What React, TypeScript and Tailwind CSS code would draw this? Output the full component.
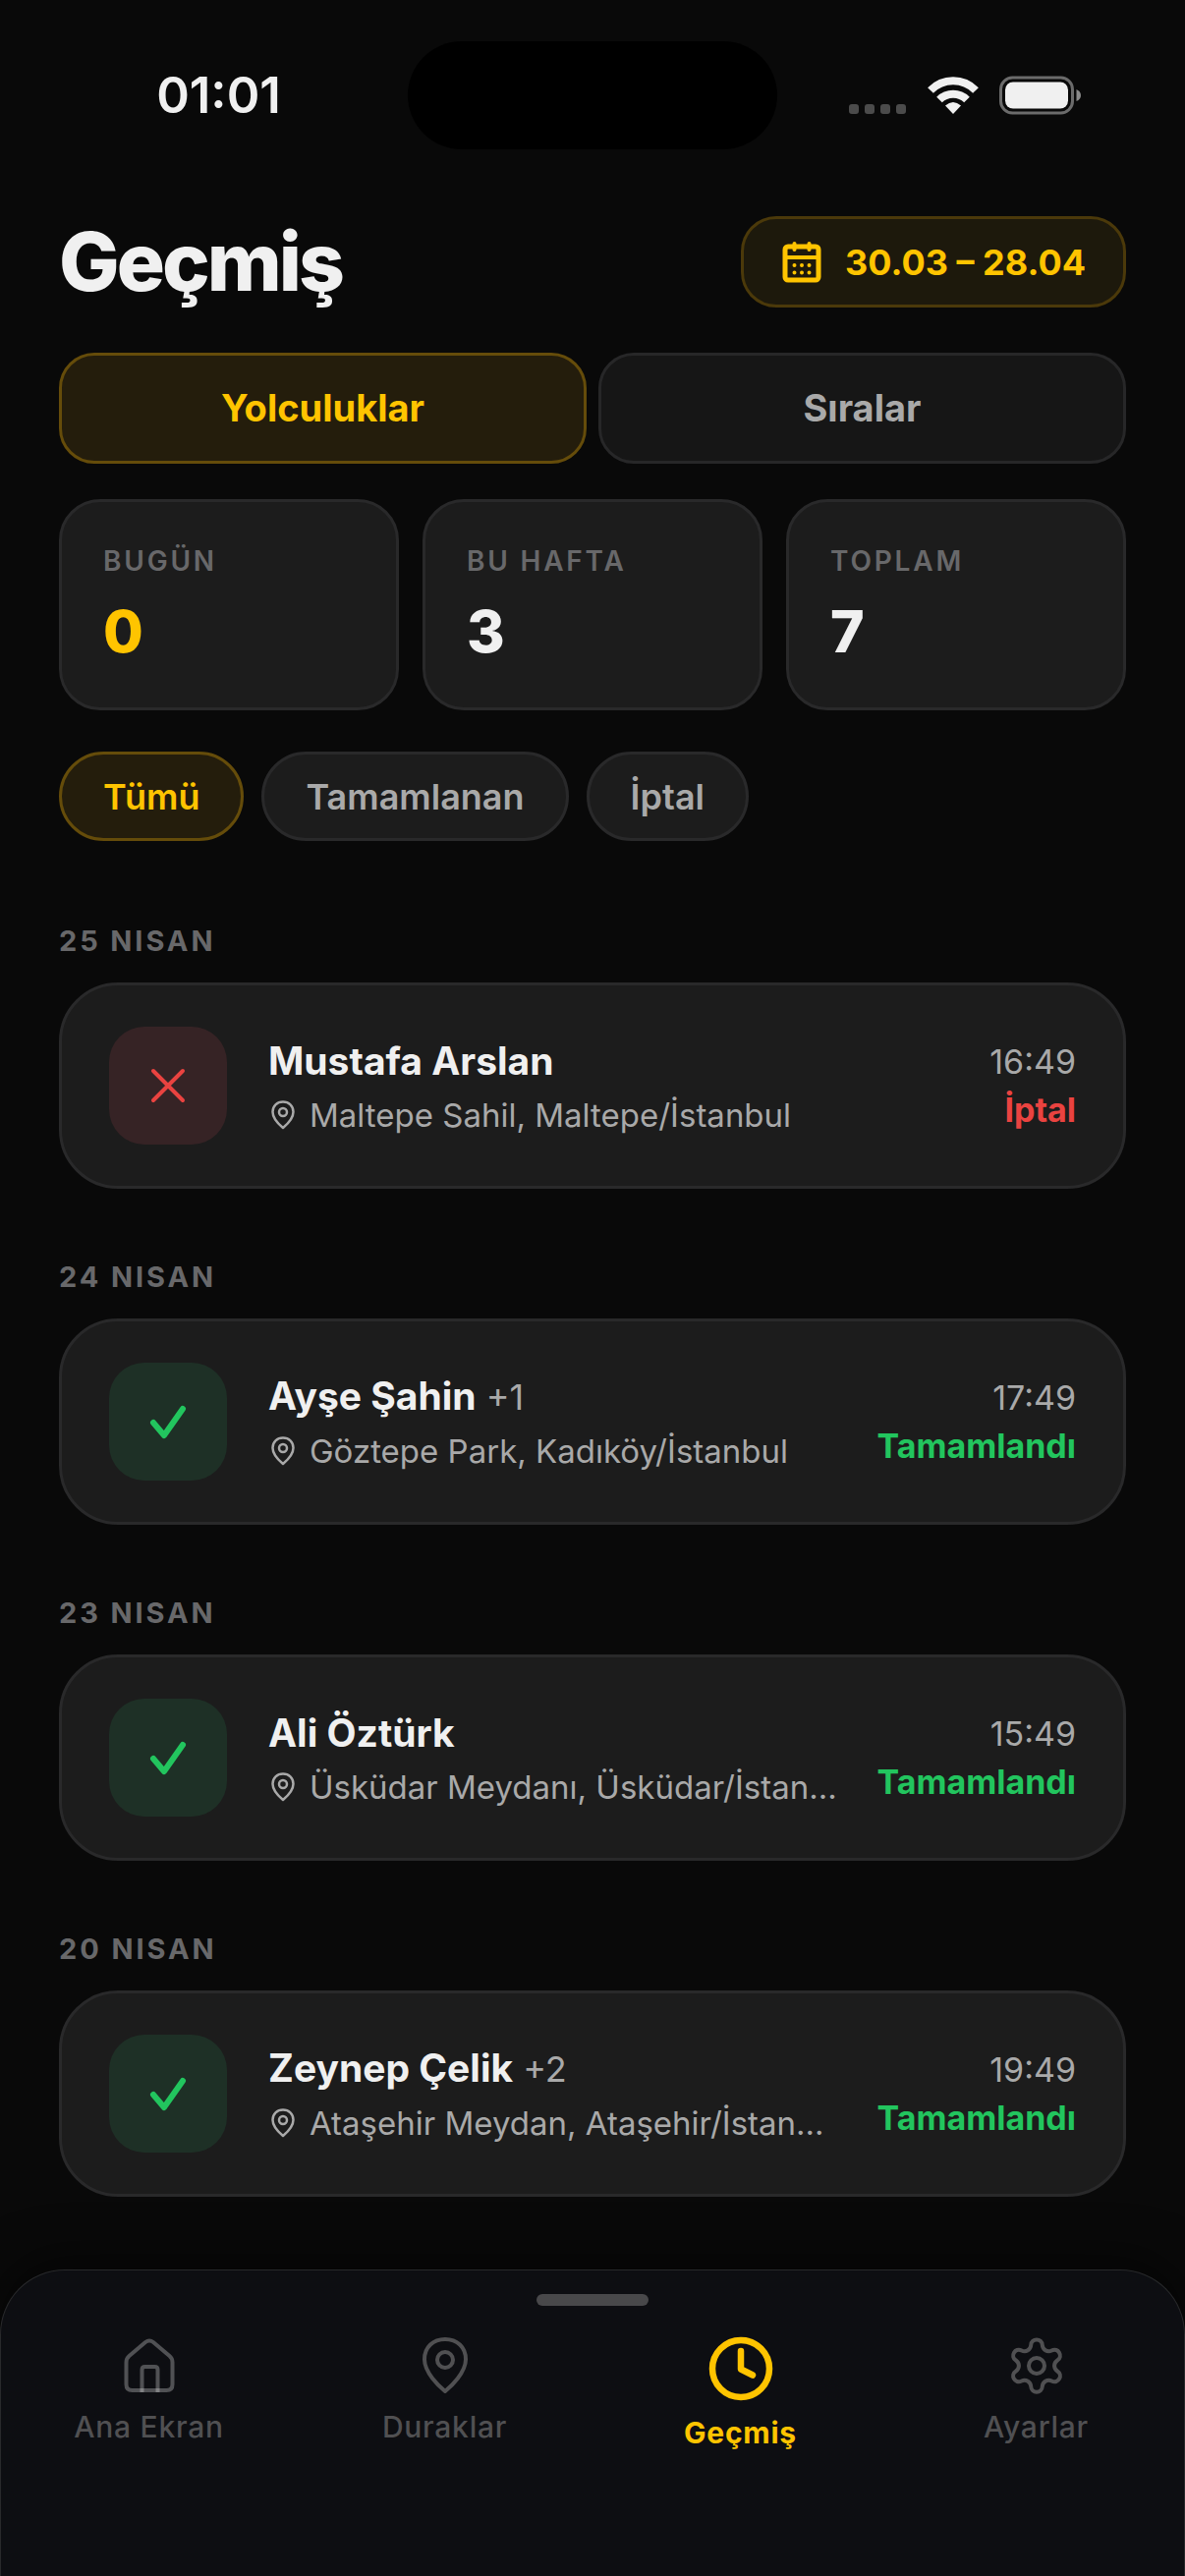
import { useState } from 'react';
import clsx from 'clsx';

type Status = 'done' | 'cancelled';

interface Trip {
  date: string;
  name: string;
  extra?: string;
  address: string;
  time: string;
  status: Status;
}

const TRIPS: Trip[] = [
  { date: '25 NISAN', name: 'Mustafa Arslan', address: 'Maltepe Sahil, Maltepe/İstanbul', time: '16:49', status: 'cancelled' },
  { date: '24 NISAN', name: 'Ayşe Şahin', extra: '+1', address: 'Göztepe Park, Kadıköy/İstanbul', time: '17:49', status: 'done' },
  { date: '23 NISAN', name: 'Ali Öztürk', address: 'Üsküdar Meydanı, Üsküdar/İstanbul', time: '15:49', status: 'done' },
  { date: '20 NISAN', name: 'Zeynep Çelik', extra: '+2', address: 'Ataşehir Meydan, Ataşehir/İstanbul', time: '19:49', status: 'done' },
];

const STATS = [
  { label: 'BUGÜN', value: 0, accent: true },
  { label: 'BU HAFTA', value: 3 },
  { label: 'TOPLAM', value: 7 },
];

const TABS = ['Yolculuklar', 'Sıralar'];
const FILTERS = ['Tümü', 'Tamamlanan', 'İptal'];

function PinIcon({ className, strokeWidth }: { className: string; strokeWidth: number }) {
  return (
    <svg viewBox="0 0 48 60" className={className} fill="none" stroke="currentColor" strokeWidth={strokeWidth} strokeLinejoin="round" aria-hidden="true">
      <path d="M24 56C18 51 3 37 3 23.5C3 11 12 3 24 3S45 11 45 23.5C45 37 30 51 24 56Z" />
      <circle cx="24" cy="24" r="8" />
    </svg>
  );
}

function CalendarIcon() {
  return (
    <svg viewBox="0 0 42 44" className="h-11 w-[42px]" fill="none" stroke="currentColor" strokeWidth="5" strokeLinecap="round" aria-hidden="true">
      <rect x="4" y="6" width="34" height="34" rx="3" />
      <path d="M4 17H38" strokeWidth="4" />
      <path d="M13.500 3V9M28.500 3V9" strokeWidth="4" />
      <path d="M13.500 25V25.100M21 25V25.100M28.500 25V25.100M13.500 32.500V32.600M21 32.500V32.600M28.500 32.500V32.600" strokeWidth="4" />
    </svg>
  );
}

function HomeIcon() {
  return (
    <svg viewBox="0 0 60 60" className="size-[60px]" fill="none" stroke="white" strokeOpacity="0.28" strokeWidth="4" aria-hidden="true">
      <path d="M6.5 26.5Q6.5 22.5 9.5 20L26 6Q30 3 34 6L50.5 20Q53.5 22.5 53.5 26.5V49Q53.5 55 47.5 55H12.5Q6.5 55 6.5 49Z" />
      <path d="M22.5 57V34Q22.5 31 25.5 31H35.5Q38.5 31 38.5 34V57" />
    </svg>
  );
}

function ClockIcon() {
  return (
    <svg viewBox="0 0 66 66" className="size-[66px]" fill="none" stroke="currentColor" strokeWidth="6.5" strokeLinecap="round" strokeLinejoin="round" aria-hidden="true">
      <circle cx="33" cy="33" r="29" />
      <path d="M33 15V33.5L45 39.5" />
    </svg>
  );
}

function GearIcon() {
  return (
    <svg viewBox="0 0 60 60" className="size-[60px]" fill="none" stroke="currentColor" strokeWidth="4" aria-hidden="true">
      {[0, 60, 120, 180, 240, 300].map(angle => (
        <path key={angle} transform={`translate(30 30) rotate(${angle})`} d="M-9.2 -15.5Q-6 -17.5 -5.8 -21C-5.5 -28.5 5.5 -28.5 5.8 -21Q6 -17.5 9.2 -15.5" />
      ))}
      <circle cx="30" cy="30" r="8" />
    </svg>
  );
}

function StatusBar() {
  return (
    <div className="grid grid-cols-[1fr_376px_1fr] items-center pt-[42px]">
      <span className="justify-self-center pl-[30px] text-[51px] leading-[60px] font-semibold text-[#f0f0f0]">01:01</span>
      <div className="h-[110px] rounded-full bg-black" />
      <div className="flex items-center justify-self-end pr-[106px]">
        <div className="flex gap-[6px] pt-7">
          {[0, 1, 2, 3].map(i => (
            <i key={i} className="size-[10px] rounded-[3px] bg-[#4b4b4b]" />
          ))}
        </div>
        <svg viewBox="0 0 52 38" className="ml-[22px] h-[38px] w-[52px]" fill="none" stroke="#f0f0f0" strokeWidth="8" aria-hidden="true">
          <path d="M3 14A32 32 0 0 1 49 14" />
          <path d="M12 23.5A20 20 0 0 1 40 23.5" />
          <path d="M26 38L18 29.5Q26 22.5 34 29.5Z" fill="#f0f0f0" stroke="none" />
        </svg>
        <svg viewBox="0 0 83 40" className="ml-[21px] h-10 w-[83px]" aria-hidden="true">
          <rect x="1.5" y="2" width="73" height="36" rx="12" fill="none" stroke="#6b6b6b" strokeWidth="3" />
          <rect x="6" y="6.5" width="64" height="27" rx="8" fill="#f0f0f0" />
          <path d="M78.5 14Q83 16 83 20T78.5 26Z" fill="#8a8a8a" />
        </svg>
      </div>
    </div>
  );
}

function TripCard({ trip }: { trip: Trip }) {
  const done = trip.status === 'done';
  return (
    <section className="flex flex-col gap-6">
      <h2 className="text-[29px] leading-9 font-bold tracking-widest text-[#68686a]">{trip.date}</h2>
      <article className="flex items-center rounded-[60px] border-3 border-[#29292a] bg-[#1c1c1c] px-12 py-[42px]">
        <div className={clsx('size-[120px] shrink-0 rounded-[36px]', done ? 'bg-[#1e3026] text-[#22c55e]' : 'bg-[#362325] text-[#ea4340]')}>
          <svg viewBox="0 0 120 120" fill="none" stroke="currentColor" strokeLinecap="round" strokeLinejoin="round" aria-hidden="true">
            {done ? <path d="M45 61L56 74L75 47" strokeWidth="6" /> : <path d="M45 45L75 75M75 45L45 75" strokeWidth="4" />}
          </svg>
        </div>
        <div className="ml-[42px] flex min-w-0 flex-1 flex-col gap-[6px] pt-[3px]">
          <p className="truncate text-[39px] leading-[50px] font-bold text-[#f0f0f0]">
            {trip.name}
            {trip.extra && <span className="text-[36px] font-normal text-[#a9a9a9]"> {trip.extra}</span>}
          </p>
          <p className="flex items-center gap-[18px] text-[33px] leading-[48px] text-[#a9a9a9]">
            <PinIcon className="h-[30px] w-6 shrink-0 translate-x-[3px]" strokeWidth={5} />
            <span className="truncate">{trip.address}</span>
          </p>
        </div>
        <div className="ml-[39px] flex shrink-0 flex-col items-end gap-1 text-[34px] leading-[45px]">
          <time className="text-[#a9a9a9]">{trip.time}</time>
          <span className={clsx('font-bold', done ? 'text-[#22c55e]' : 'text-[#ea4340]')}>{done ? 'Tamamlandı' : 'İptal'}</span>
        </div>
      </article>
    </section>
  );
}

const NAV = [
  { label: 'Ana Ekran', icon: <HomeIcon /> },
  { label: 'Duraklar', icon: <PinIcon className="h-[60px] w-12" strokeWidth={4} /> },
  { label: 'Geçmiş', icon: <ClockIcon />, active: true },
  { label: 'Ayarlar', icon: <GearIcon /> },
];

function BottomNav() {
  return (
    <nav className="mt-auto flex h-[312px] flex-col items-center rounded-t-[66px] border border-b-0 border-[#28292b] bg-[#0d0e12] pt-6 shadow-[0_-12px_48px_rgba(0,0,0,0.5)]">
      <div className="h-3 w-[114px] rounded-full bg-[#48484a]" />
      <div className="mt-[31px] grid w-full grid-cols-4">
        {NAV.map(item => (
          <a
            key={item.label}
            href="#"
            className={clsx('flex flex-col items-center gap-[14px] text-[30px] leading-9 tracking-wide', item.active ? 'font-bold text-[#ffc400]' : 'font-medium text-[#505052]')}
          >
            {item.icon}
            {item.label}
          </a>
        ))}
      </div>
    </nav>
  );
}

export default function App() {
  const [tab, setTab] = useState('Yolculuklar');
  const [filter, setFilter] = useState('Tümü');

  return (
    <div className="flex min-h-screen flex-col bg-[#090909] font-['Inter',sans-serif]">
      <StatusBar />
      <main className="flex flex-col px-[60px] pb-[74px]">
        <header className="mt-[68px] flex items-center justify-between">
          <h1 className="text-[82px] leading-[93px] font-extrabold tracking-[-3px] text-[#f0f0f0]">Geçmiş</h1>
          <button className="flex h-[93px] items-center gap-[23px] rounded-[36px] border-3 border-[#4b390a] bg-[#1d190c] px-[38px] text-[36px] font-bold text-[#ffc400]">
            <CalendarIcon />
            30.03 – 28.04
          </button>
        </header>

        <div className="mt-[46px] grid grid-cols-2 gap-3">
          {TABS.map(t => (
            <button
              key={t}
              onClick={() => setTab(t)}
              className={clsx(
                'h-[113px] rounded-[36px] border-3 text-[38px] font-bold',
                t === tab ? 'border-[#654c0a] bg-[#241d0c] text-[#ffc400]' : 'border-[#272728] bg-[#161616] text-[#a9a9a9]'
              )}
            >
              {t}
            </button>
          ))}
        </div>

        <div className="mt-9 grid grid-cols-3 gap-6">
          {STATS.map(s => (
            <div key={s.label} className="flex h-[215px] flex-col rounded-[42px] border-3 border-[#29292a] bg-[#1c1c1c] px-[42px] pt-[42px]">
              <span className="text-[28px] leading-9 font-semibold tracking-widest text-[#68686a]">{s.label}</span>
              <span className={clsx('mt-[18px] text-[59px] leading-[72px] font-extrabold', s.accent ? 'text-[#ffc400]' : 'text-[#f0f0f0]')}>{s.value}</span>
            </div>
          ))}
        </div>

        <div className="mt-[42px] flex gap-[18px]">
          {FILTERS.map(f => (
            <button
              key={f}
              onClick={() => setFilter(f)}
              className={clsx(
                'h-[91px] rounded-full border-3 px-[42px] text-[36px] font-semibold',
                f === filter ? 'border-[#654c0a] bg-[#241d0c] text-[#ffc400]' : 'border-[#29292a] bg-[#1c1c1c] text-[#a9a9a9]'
              )}
            >
              {f}
            </button>
          ))}
        </div>

        <div className="mt-[84px] flex flex-col gap-[72px]">
          {TRIPS.map(trip => (
            <TripCard key={trip.date} trip={trip} />
          ))}
        </div>
      </main>
      <BottomNav />
    </div>
  );
}
